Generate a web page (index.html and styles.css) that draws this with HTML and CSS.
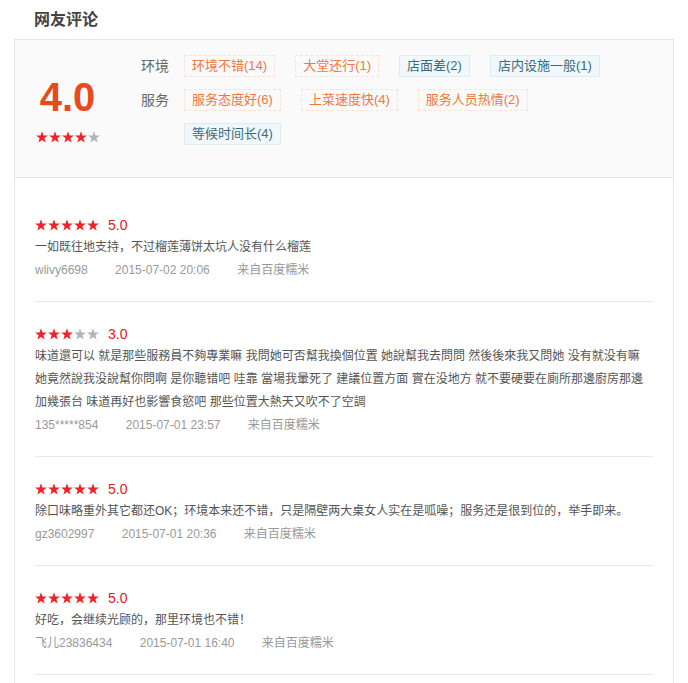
FILE: index.html
```html
<!DOCTYPE html>
<html lang="zh-CN">
<head>
    <meta charset="UTF-8">
    <title>网友评论</title>
    <link rel="stylesheet" href="styles.css">
</head>
<body>
    <svg class="defs" width="0" height="0">
        <symbol id="star" viewBox="0 0 12 12">
            <polygon points="6,0.2 7.47,4.38 11.9,4.48 8.38,7.17 9.64,11.42 6,8.9 2.36,11.42 3.62,7.17 0.1,4.48 4.53,4.38"/>
        </symbol>
    </svg>

    <h2 class="title">网友评论</h2>

    <div class="panel">
        <div class="summary">
            <div class="score">
                <div class="score-num">4.0</div>
                <svg class="stars" width="64" height="12" viewBox="0 0 64 12">
                    <use href="#star" x="0" width="12" height="12" class="on"/>
                    <use href="#star" x="13" width="12" height="12" class="on"/>
                    <use href="#star" x="26" width="12" height="12" class="on"/>
                    <use href="#star" x="39" width="12" height="12" class="on"/>
                    <use href="#star" x="52" width="12" height="12" class="off"/>
                </svg>
            </div>
            <div class="tags">
                <div class="tag-row">
                    <span class="tag-label">环境</span>
                    <div class="tag-list">
                        <span class="tag good">环境不错(14)</span>
                        <span class="tag good">大堂还行(1)</span>
                        <span class="tag bad">店面差(2)</span>
                        <span class="tag bad">店内设施一般(1)</span>
                    </div>
                </div>
                <div class="tag-row">
                    <span class="tag-label">服务</span>
                    <div class="tag-list">
                        <span class="tag good">服务态度好(6)</span>
                        <span class="tag good">上菜速度快(4)</span>
                        <span class="tag good">服务人员热情(2)</span>
                        <span class="tag bad">等候时间长(4)</span>
                    </div>
                </div>
            </div>
        </div>

        <ul class="reviews">
            <li class="review">
                <div class="rating">
                    <svg class="stars" width="64" height="12" viewBox="0 0 64 12">
                        <use href="#star" x="0" width="12" height="12" class="on"/>
                        <use href="#star" x="13" width="12" height="12" class="on"/>
                        <use href="#star" x="26" width="12" height="12" class="on"/>
                        <use href="#star" x="39" width="12" height="12" class="on"/>
                        <use href="#star" x="52" width="12" height="12" class="on"/>
                    </svg>
                    <span class="rating-num">5.0</span>
                </div>
                <p class="review-text">一如既往地支持，不过榴莲薄饼太坑人没有什么榴莲</p>
                <div class="meta">
                    <span>wlivy6698</span>
                    <span>2015-07-02 20:06</span>
                    <span>来自百度糯米</span>
                </div>
            </li>
            <li class="review">
                <div class="rating">
                    <svg class="stars" width="64" height="12" viewBox="0 0 64 12">
                        <use href="#star" x="0" width="12" height="12" class="on"/>
                        <use href="#star" x="13" width="12" height="12" class="on"/>
                        <use href="#star" x="26" width="12" height="12" class="on"/>
                        <use href="#star" x="39" width="12" height="12" class="off"/>
                        <use href="#star" x="52" width="12" height="12" class="off"/>
                    </svg>
                    <span class="rating-num">3.0</span>
                </div>
                <p class="review-text">味道還可以 就是那些服務員不夠專業嘛 我問她可否幫我換個位置 她說幫我去問問 然後後來我又問她 没有就没有嘛 她竟然說我没說幫你問啊 是你聽错吧 哇靠 當場我暈死了 建議位置方面 實在没地方 就不要硬要在廁所那邊廚房那邊 加幾張台 味道再好也影響食慾吧 那些位置大熱天又吹不了空調</p>
                <div class="meta">
                    <span>135*****854</span>
                    <span>2015-07-01 23:57</span>
                    <span>来自百度糯米</span>
                </div>
            </li>
            <li class="review">
                <div class="rating">
                    <svg class="stars" width="64" height="12" viewBox="0 0 64 12">
                        <use href="#star" x="0" width="12" height="12" class="on"/>
                        <use href="#star" x="13" width="12" height="12" class="on"/>
                        <use href="#star" x="26" width="12" height="12" class="on"/>
                        <use href="#star" x="39" width="12" height="12" class="on"/>
                        <use href="#star" x="52" width="12" height="12" class="on"/>
                    </svg>
                    <span class="rating-num">5.0</span>
                </div>
                <p class="review-text">除口味略重外其它都还OK；环境本来还不错，只是隔壁两大桌女人实在是呱噪；服务还是很到位的，举手即来。</p>
                <div class="meta">
                    <span>gz3602997</span>
                    <span>2015-07-01 20:36</span>
                    <span>来自百度糯米</span>
                </div>
            </li>
            <li class="review">
                <div class="rating">
                    <svg class="stars" width="64" height="12" viewBox="0 0 64 12">
                        <use href="#star" x="0" width="12" height="12" class="on"/>
                        <use href="#star" x="13" width="12" height="12" class="on"/>
                        <use href="#star" x="26" width="12" height="12" class="on"/>
                        <use href="#star" x="39" width="12" height="12" class="on"/>
                        <use href="#star" x="52" width="12" height="12" class="on"/>
                    </svg>
                    <span class="rating-num">5.0</span>
                </div>
                <p class="review-text">好吃，会继续光顾的，那里环境也不错！</p>
                <div class="meta">
                    <span>飞儿23836434</span>
                    <span>2015-07-01 16:40</span>
                    <span>来自百度糯米</span>
                </div>
            </li>
        </ul>
    </div>
</body>
</html>
```

FILE: styles.css
```css
body {
    margin: 0;
    padding: 0;
    background-color: #fff;
    font-family: "Liberation Sans", "Noto Sans CJK SC", sans-serif;
    color: #555;
}
.defs {
    position: absolute;
    width: 0;
    height: 0;
    overflow: hidden;
}
.title {
    margin: 0 0 0 34px;
    height: 39px;
    line-height: 39px;
    font-size: 16px;
    font-weight: bold;
    color: #444;
}
.panel {
    margin-left: 14px;
    width: 660px;
    box-sizing: border-box;
    border: 1px solid #e6e6e6;
    border-bottom: none;
    min-height: 660px;
}

/* summary block */
.summary {
    display: flex;
    padding: 15px 40px 20px 0;
    background-color: #fafafa;
    border-bottom: 1px solid #e8e8e8;
}
.score {
    width: 105px;
    padding-top: 22px;
    text-align: center;
}
.score-num {
    font-size: 40px;
    line-height: 40px;
    font-weight: bold;
    color: #e8491d;
}
.score .stars {
    display: block;
    margin: 14px auto 0;
}
.stars .on {
    fill: #f0232a;
}
.stars .off {
    fill: #b4b4b4;
}
.tags {
    flex: 1;
    margin-left: 21px;
}
.tag-row {
    display: flex;
}
.tag-label {
    width: 28px;
    margin-right: 15px;
    flex-shrink: 0;
    font-size: 14px;
    line-height: 22px;
    color: #666;
}
.tag-list {
    display: flex;
    flex-wrap: wrap;
    flex: 1;
}
.tag {
    height: 22px;
    line-height: 20px;
    box-sizing: border-box;
    padding: 0 7px;
    margin: 0 20px 12px 0;
    font-size: 13px;
    border: 1px solid;
}
.tag.good {
    color: #f0783a;
    border-color: #fbe1d2;
    border-style: dashed;
}
.tag.bad {
    color: #3b6a7c;
    background-color: #f1f8fb;
    border-color: #dcecf2;
}

/* review list */
.reviews {
    list-style: none;
    margin: 0;
    padding: 15px 20px 0;
}
.review {
    padding: 21px 0 20px;
    border-bottom: 1px solid #e8e8e8;
}
.rating {
    display: flex;
    align-items: center;
    height: 22px;
}
.rating-num {
    margin-left: 9px;
    font-size: 14px;
    color: #e4171c;
}
.review-text {
    margin: 0;
    padding-right: 6px;
    font-size: 12px;
    line-height: 23px;
    color: #555;
}
.meta {
    font-size: 12px;
    line-height: 22px;
    color: #999;
}
.meta span {
    margin-right: 24px;
}
```
